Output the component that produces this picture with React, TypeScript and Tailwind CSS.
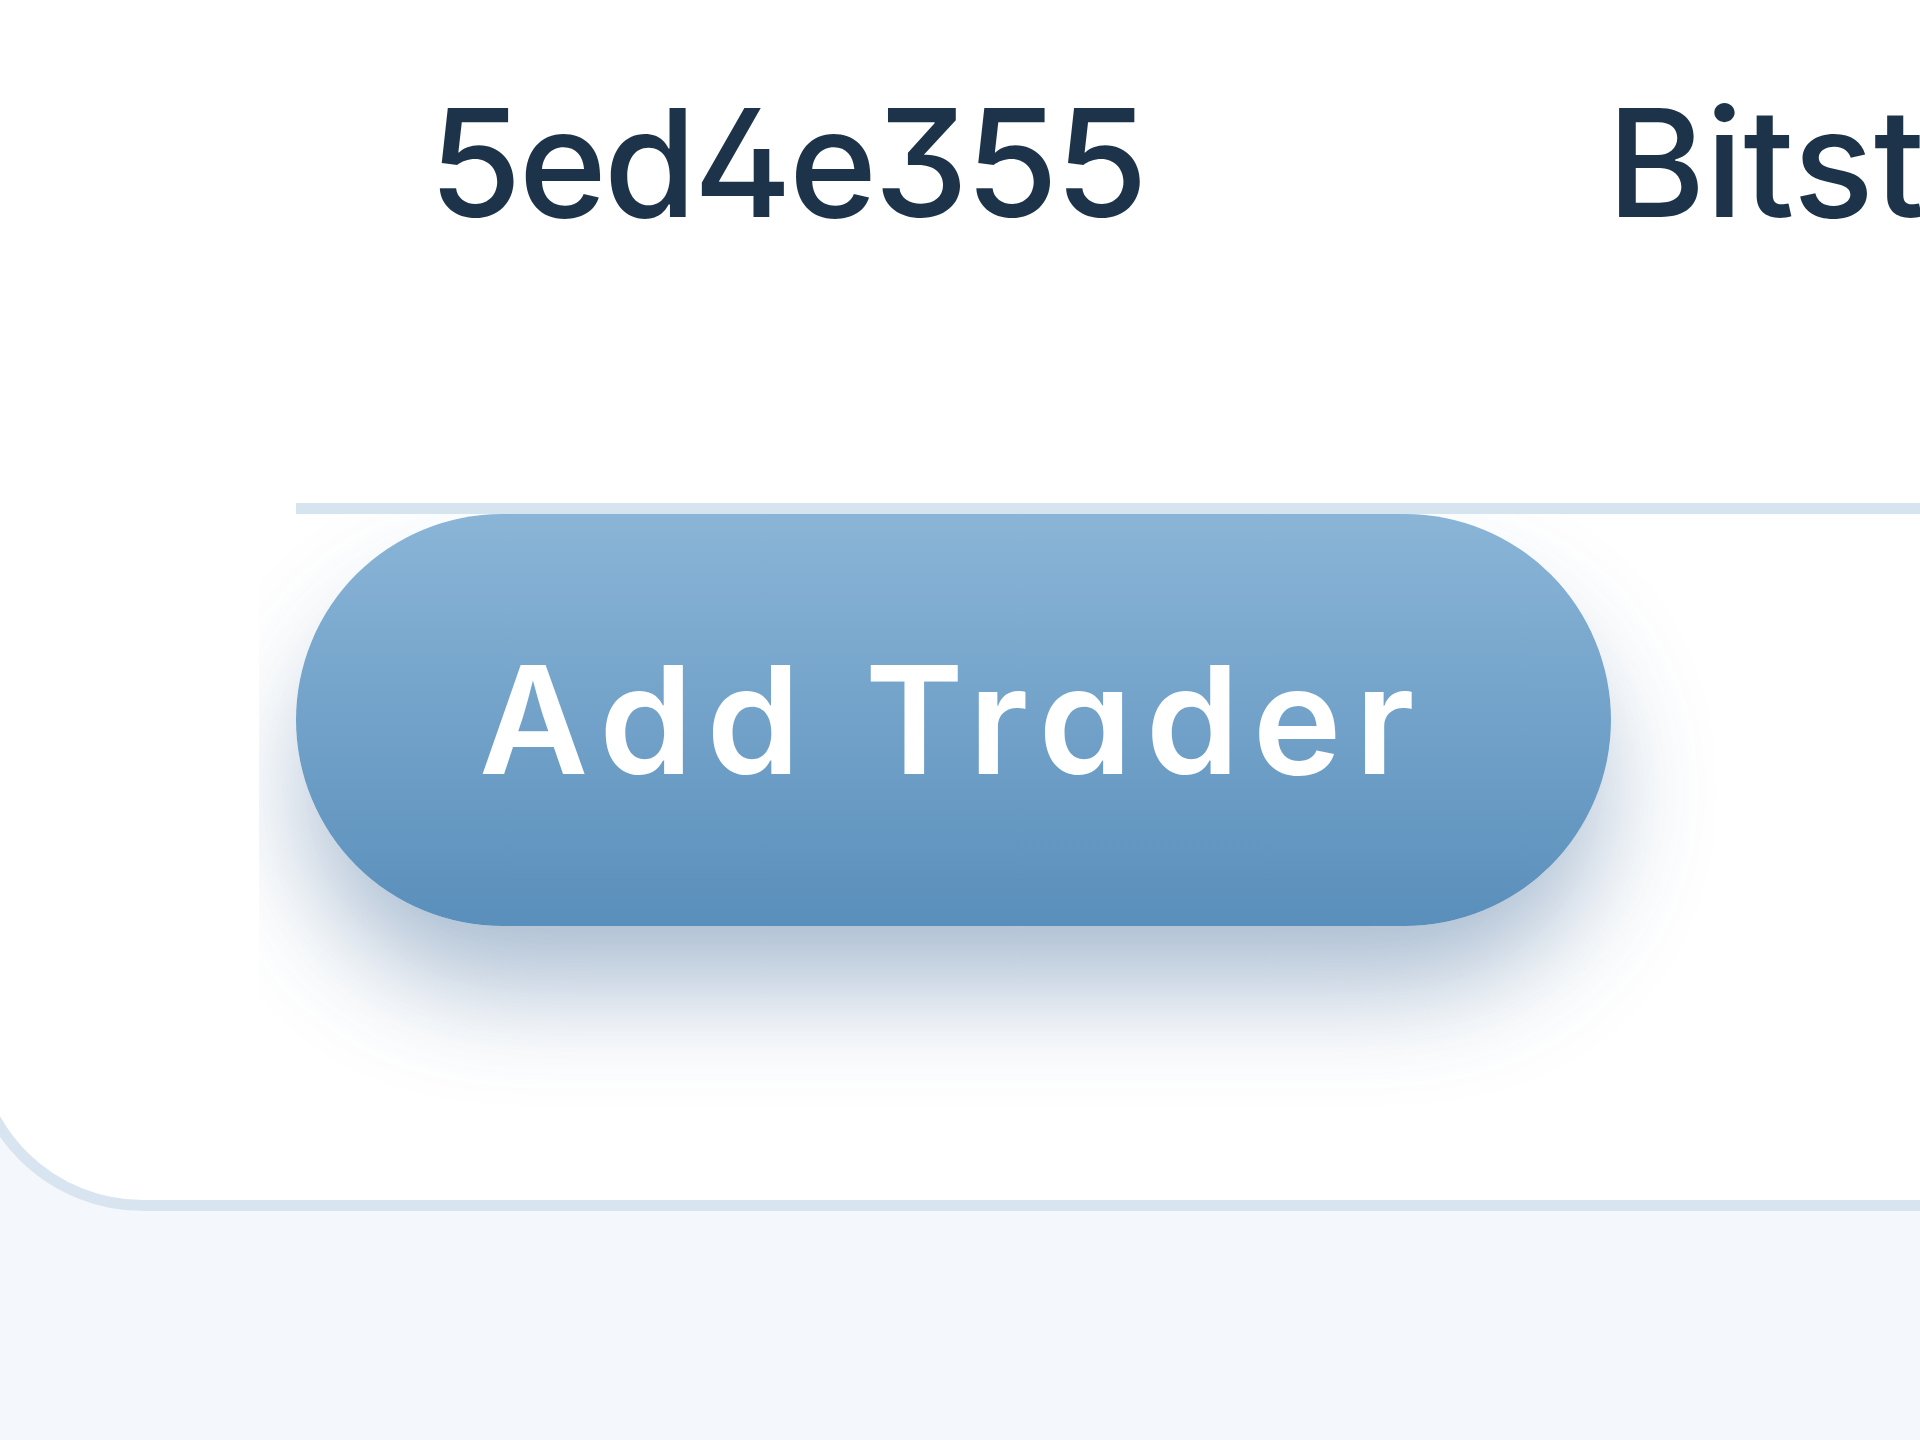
const font = "font-['Inter','Noto_Sans',sans-serif] [font-feature-settings:'cv02','cv09','cv11']";

export default function App() {
  return (
    <div className={`min-h-screen overflow-hidden bg-[#f4f7fb] ${font}`}>
      {/* Card, top and right run off screen */}
      <div className="-mt-[200px] -ml-[32px] w-[2200px] rounded-bl-[175px] border-[11px] border-[#d8e5f0] bg-white pl-[317px] pb-[90px]">
        {/* Table row */}
        <div className="flex border-b-[11px] border-[#d6e4ef] pt-[277px] pb-[265px] text-[150px] leading-[150px] font-medium tracking-[-0.02em] text-[#1d3349]">
          <div className="w-[1311px] shrink-0 pl-[133px]">5ed4e355</div>
          <div className="shrink-0 tracking-normal">Bitstamp</div>
        </div>

        {/* Action row */}
        <div className="-ml-[37px] h-[596px] w-[1463px] overflow-hidden pl-[37px]">
          <button className="flex h-[412px] w-[1315px] items-center justify-center rounded-full bg-gradient-to-b from-[#8ab5d7] to-[#5a8fbb] text-[150px] leading-none font-semibold tracking-[0.09em] text-white shadow-[0_70px_110px_-10px_rgba(50,95,145,0.42)]">
            Add Trader
          </button>
        </div>
      </div>
    </div>
  );
}
